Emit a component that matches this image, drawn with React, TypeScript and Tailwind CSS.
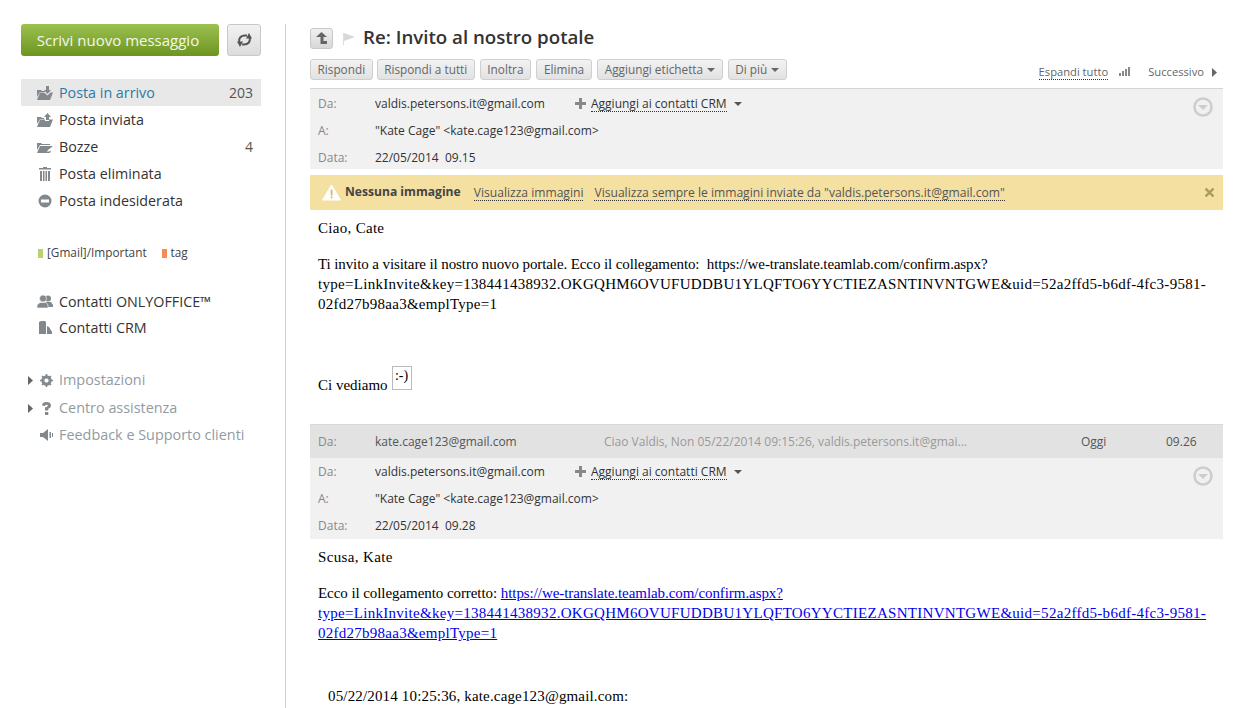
import { ReactNode } from 'react'

const sans = "font-['Open_Sans',sans-serif]"

function FolderIn() {
  return (
    <svg width="16" height="14" viewBox="0 0 16 14" fill="#83888d">
      <path d="M0 11V4h4l1 1h3v1H3z" />
      <path d="M3 6.500h4l3.500 3 3-3H16l-3 7.500H0z" />
      <path d="M9 0h3v4h2l-3.500 4L7 4h2z" />
    </svg>
  )
}

function FolderOut() {
  return (
    <svg width="16" height="14" viewBox="0 0 16 14" fill="#83888d">
      <path d="M0 11V4h4l1 1h2v1H3z" />
      <path d="M3 6.500h5v1.500h4V6.500h4l-3 7.500H0z" />
      <path d="M10.500 0L14 4h-2v3H9V4H7z" />
    </svg>
  )
}

function FolderDraft() {
  return (
    <svg width="16" height="12" viewBox="0 0 16 12" fill="#83888d">
      <path d="M0 9V2h4l1 1h8v1H3z" />
      <path d="M3 5h13l-5 4-1 2 3-1 1-1-1 3H0z" />
    </svg>
  )
}

function Trash() {
  return (
    <svg width="12" height="14" viewBox="0 0 12 14" fill="#83888d">
      <path d="M0 1h12v1.500H0zM4 0h4v1H4z" />
      <path d="M1 4h2v10H1zM4 4h1.500v10H4zM6.500 4H8v10H6.500zM9 4h2v10H9z" />
    </svg>
  )
}

function Blocked() {
  return (
    <svg width="14" height="14" viewBox="0 0 14 14">
      <circle cx="7" cy="7" r="6.500" fill="#83888d" />
      <rect x="3" y="5.500" width="8" height="3" fill="#fff" />
    </svg>
  )
}

function People() {
  return (
    <svg width="16" height="13" viewBox="0 0 16 13" fill="#83888d">
      <circle cx="11" cy="3.500" r="3" />
      <path d="M8 7h6l2 3v2H8z" />
      <circle cx="6" cy="3.500" r="3.500" stroke="#fff" strokeWidth="0.6" />
      <path d="M3 7.500h6l2 2.500v3H0v-3z" stroke="#fff" strokeWidth="0.6" />
    </svg>
  )
}

function Building() {
  return (
    <svg width="13" height="13" viewBox="0 0 13 13" fill="#83888d">
      <path d="M0 1l2-1h4l1 1v12H0z" />
      <path d="M8 5l2 1 3 5v2H8z" />
    </svg>
  )
}

function Gear() {
  return (
    <svg width="13" height="13" viewBox="0 0 13 13">
      <circle cx="6.500" cy="6.500" r="4" fill="none" stroke="#83888d" strokeWidth="2.400" />
      <path d="M6.500 0v13M0 6.500h13M2 2l9 9M11 2l-9 9" stroke="#83888d" strokeWidth="1.600" />
      <circle cx="6.500" cy="6.500" r="2" fill="#fff" />
    </svg>
  )
}

function Question() {
  return (
    <svg width="9" height="13" viewBox="0 0 9 13" fill="#83888d">
      <path d="M0 3.500C0 1 2 0 4.500 0S9 1 9 3.500c0 2-1.500 2.700-2.700 3.300V8.500H3V5.500c1.500-.6 2.800-.8 2.800-1.900 0-1.300-2.600-1.200-2.800.4z" />
      <rect x="3" y="10" width="3.300" height="3" />
    </svg>
  )
}

function Megaphone() {
  return (
    <svg width="13" height="12" viewBox="0 0 13 12" fill="#83888d">
      <path d="M0 4h3l5-4v12L3 8H0z" />
      <rect x="9.500" y="3" width="1.500" height="6" />
      <rect x="12" y="4" width="1" height="4" />
    </svg>
  )
}

function Caret({ color = '#666', className = '' }: { color?: string; className?: string }) {
  return (
    <svg width="8" height="4" viewBox="0 0 8 4" className={className}>
      <path d="M0 0h8L4 4z" fill={color} />
    </svg>
  )
}

function ArrowRight() {
  return (
    <svg width="5" height="9" viewBox="0 0 5 9">
      <path d="M0 0l5 4.500L0 9z" fill="#666" />
    </svg>
  )
}

function NavRow({ icon, label, count, active }: { icon: ReactNode; label: string; count?: string; active?: boolean }) {
  return (
    <div className={`flex h-[27px] items-center pr-2 ${active ? 'bg-[#e8e8e8]' : ''}`}>
      <span className="flex w-[38px] justify-end pr-[6px]">
        <span className="flex w-[16px] justify-center">{icon}</span>
      </span>
      <span className={`text-[14.3px] ${active ? 'text-[#2a7bab]' : 'text-[#333]'}`}>{label}</span>
      {count && <span className="ml-auto text-[14px] text-[#555]">{count}</span>}
    </div>
  )
}

function HelpRow({ icon, label, arrow, h }: { icon: ReactNode; label: string; arrow?: boolean; h: string }) {
  return (
    <div className={`flex items-center ${h}`}>
      <span className="flex w-[38px] items-center pl-[7px]">
        <span className="w-[5px]">{arrow && <ArrowRight />}</span>
        <span className="ml-[5px] flex w-[16px] justify-center">{icon}</span>
      </span>
      <span className="text-[14.4px] text-[#929ba2]">{label}</span>
    </div>
  )
}

function Sidebar() {
  return (
    <aside className="mt-[24px] w-[286px] shrink-0 border-r border-[#d0d0d0] pl-[21px] pr-[24px]">
      <div className="flex gap-[8px]">
        <button className="h-[32px] w-[198px] rounded-[3px] bg-gradient-to-b from-[#9cc14f] to-[#6e9420] pr-[4px] text-[15px] text-[#f4f8e8]">
          Scrivi nuovo messaggio
        </button>
        <button className="flex h-[32px] w-[34px] items-center justify-center rounded-[3px] border border-[#c8c8c8] bg-gradient-to-b from-[#f2f2f2] to-[#dcdcdc]">
          <svg width="15" height="14" viewBox="0 0 15 14" fill="none" stroke="#555" strokeWidth="2">
            <path d="M2.200 9C1.500 5 4 2.500 8 2.500h2" />
            <path d="M12.800 5c.7 4-1.800 6.500-5.800 6.500H5" />
            <path d="M12 0l3 5.500H9z" fill="#555" stroke="none" />
            <path d="M3 14L0 8.500h6z" fill="#555" stroke="none" />
          </svg>
        </button>
      </div>

      <nav className="mt-[23px]">
        <NavRow icon={<FolderIn />} label="Posta in arrivo" count="203" active />
        <NavRow icon={<FolderOut />} label="Posta inviata" />
        <NavRow icon={<FolderDraft />} label="Bozze" count="4" />
        <NavRow icon={<Trash />} label="Posta eliminata" />
        <NavRow icon={<Blocked />} label="Posta indesiderata" />
      </nav>

      <div className="mt-[29px] flex h-[20px] items-center pl-[17px] text-[11.8px] text-[#444]">
        <span className="mr-[4px] h-[9px] w-[5px] bg-[#b9d26e]" />
        <span>[Gmail]/Important</span>
        <span className="ml-[15px] mr-[4px] h-[9px] w-[5px] bg-[#f98a58]" />
        <span>tag</span>
      </div>

      <div className="mt-[25px]">
        <NavRow icon={<People />} label="Contatti ONLYOFFICE™" />
        <div className="-mt-[1px]">
          <NavRow icon={<Building />} label="Contatti CRM" />
        </div>
      </div>

      <div className="mt-[25px]">
        <HelpRow icon={<Gear />} label="Impostazioni" arrow h="h-[28px]" />
        <HelpRow icon={<Question />} label="Centro assistenza" arrow h="h-[28px]" />
        <HelpRow icon={<Megaphone />} label="Feedback e Supporto clienti" h="h-[26px]" />
      </div>
    </aside>
  )
}

function ToolButton({ children, className = 'px-[6.500px]' }: { children: ReactNode; className?: string }) {
  return (
    <button className={`flex h-[21px] items-center gap-[4px] rounded-[3px] border border-[#cfcfcf] bg-gradient-to-b from-[#f2f2f2] to-[#e2e2e2] text-[11.8px] text-[#666] ${className}`}>
      {children}
    </button>
  )
}

function HeaderRow({ label, children }: { label: string; children: ReactNode }) {
  return (
    <div className="flex h-[27px] shrink-0 items-center text-[12px] text-[#333]">
      <span className="w-[57px] text-[#888]">{label}</span>
      {children}
    </div>
  )
}

function MessageHeader({ from, date, className }: { from: string; date: string; className: string }) {
  return (
    <div className={`relative bg-[#f1f1f1] pl-[8px] ${className}`}>
      <HeaderRow label="Da:">
        <span className="w-[200px]">{from}</span>
        <svg width="11" height="11" viewBox="0 0 11 11" fill="#888" className="mr-[5px]">
          <path d="M4 0h3v4h4v3H7v4H4V7H0V4h4z" />
        </svg>
        <span className="border-b border-dotted border-[#333] leading-[15px] text-[#333]">Aggiungi ai contatti CRM</span>
        <Caret color="#555" className="ml-[7px]" />
      </HeaderRow>
      <HeaderRow label="A:">
        <span>"Kate Cage" &lt;kate.cage123@gmail.com&gt;</span>
      </HeaderRow>
      <HeaderRow label="Data:">
        <span>{date}</span>
      </HeaderRow>
      <svg width="20" height="20" viewBox="0 0 20 20" className="absolute right-[10px] top-[8px]">
        <circle cx="10" cy="10" r="8.500" fill="none" stroke="#cdcdcd" strokeWidth="2.500" />
        <path d="M5 8h10l-5 5z" fill="#cdcdcd" />
      </svg>
    </div>
  )
}

function MailText({ children }: { children: ReactNode }) {
  return <div className="whitespace-nowrap font-['Liberation_Serif',serif] text-[15px] leading-[20px] text-black">{children}</div>
}

function Main() {
  return (
    <main className="min-w-0 flex-1 pl-[24px] pr-[17px] pt-[26px]">
      <div className="flex h-[24px] items-center">
        <button className="flex h-[21px] w-[23px] items-center justify-center rounded-[3px] border border-[#c8c8c8] bg-gradient-to-b from-[#f0f0f0] to-[#d8d8d8]">
          <svg width="11" height="12" viewBox="0 0 11 12" fill="#666">
            <path d="M5.500 0L11 5H7.500v4H11v3H4.500V5H0z" />
          </svg>
        </button>
        <svg width="12" height="13" viewBox="0 0 12 13" className="ml-[10px]">
          <rect x="0" y="1" width="1" height="12" fill="#ddd" />
          <path d="M1 1l11 4-11 4z" fill="#d8d8d8" />
        </svg>
        <h1 className="mb-[2px] ml-[8px] text-[18.7px] font-semibold text-[#333]">Re: Invito al nostro potale</h1>
      </div>

      <div className="mt-[9px] flex h-[21px] items-center gap-[5px]">
        <ToolButton>Rispondi</ToolButton>
        <div className="-ml-[1px]">
          <ToolButton>Rispondi a tutti</ToolButton>
        </div>
        <ToolButton>Inoltra</ToolButton>
        <ToolButton className="px-[7px]">Elimina</ToolButton>
        <ToolButton>
          Aggiungi etichetta <Caret />
        </ToolButton>
        <ToolButton>
          Di più <Caret />
        </ToolButton>
        <div className="ml-auto mt-[5px] flex items-center text-[11.2px] text-[#666]">
          <span className="border-b border-dotted border-[#333] leading-[14px]">Espandi tutto</span>
          <svg width="11" height="9" viewBox="0 0 11 9" fill="#888" className="mb-[2px] ml-[11px]">
            <rect x="0" y="6" width="2" height="3" />
            <rect x="3" y="4" width="2" height="5" />
            <rect x="6" y="2" width="2" height="7" />
            <rect x="9" y="0" width="2" height="9" />
          </svg>
          <span className="ml-[18px]">Successivo</span>
          <span className="ml-[8px] mr-[6px]">
            <ArrowRight />
          </span>
        </div>
      </div>

      <div className="mt-[8px] border-t border-[#d4d4d4]">
        <MessageHeader from="valdis.petersons.it@gmail.com" date="22/05/2014 &nbsp;09.15" className="h-[80px] pt-[1px]" />
      </div>

      <div className="mt-[6px] flex h-[35px] items-center bg-[#f4e0a1] pl-[12px] pr-[9px] text-[12.1px]">
        <svg width="19" height="17" viewBox="0 0 19 17" className="mr-[4px]">
          <path d="M9.500 1L18.500 16H.5z" fill="#fff" stroke="#fff" strokeLinejoin="round" />
          <rect x="8.700" y="5.500" width="1.800" height="6" fill="#d9b866" />
          <rect x="8.700" y="12.500" width="1.800" height="1.800" fill="#d9b866" />
        </svg>
        <span className="font-bold text-[#444]">Nessuna immagine</span>
        <span className="ml-[13px] border-b border-dotted border-[#333] leading-[15px] text-[#555]">Visualizza immagini</span>
        <span className="ml-[11px] border-b border-dotted border-[#333] leading-[15px] text-[#555]">
          Visualizza sempre le immagini inviate da "valdis.petersons.it@gmail.com"
        </span>
        <svg width="9" height="9" viewBox="0 0 9 9" className="ml-auto" stroke="#a89d5e" strokeWidth="2.400">
          <path d="M0.500 0.500l8 8M8.500 0.500l-8 8" />
        </svg>
      </div>

      <div className="h-[214px] pl-[8px] pr-[16px] pt-[8px]">
        <MailText>
          <span className="tracking-[0.3px]">Ciao, Cate</span>
        </MailText>
        <div className="mt-[16px]">
          <MailText>
            <span className="tracking-[-0.1px]">Ti invito a visitare il nostro nuovo portale. Ecco il collegamento:&nbsp; https://we-translate.teamlab.com/confirm.aspx?</span>
            <br />
            <span className="tracking-[0.29px]">type=LinkInvite&amp;key=138441438932.OKGQHM6OVUFUDDBU1YLQFTO6YYCTIEZASNTINVNTGWE&amp;uid=52a2ffd5-b6df-4fc3-9581-</span>
            <br />
            <span className="tracking-[0.26px]">02fd27b98aa3&amp;emplType=1</span>
          </MailText>
        </div>
        <div className="mt-[52px] flex items-end">
          <MailText>Ci vediamo</MailText>
          <span className="mb-[5px] ml-[4px] flex h-[24px] w-[20px] justify-center border border-[#bbb] font-['Liberation_Serif',serif] text-[14px] leading-[18px] text-black">
            :-)
          </span>
        </div>
      </div>

      <div className="flex h-[34px] items-center border-t border-[#d8d8d8] bg-[#e2e2e2] pl-[8px] text-[12px] text-[#555]">
        <span className="w-[57px] text-[#888]">Da:</span>
        <span className="w-[229px]">kate.cage123@gmail.com</span>
        <span className="w-[477px] text-[#999]">Ciao Valdis, Non 05/22/2014 09:15:26, valdis.petersons.it@gmai...</span>
        <span className="w-[85px]">Oggi</span>
        <span>09.26</span>
      </div>

      <MessageHeader from="valdis.petersons.it@gmail.com" date="22/05/2014 &nbsp;09.28" className="h-[81px]" />

      <div className="pl-[8px] pr-[16px] pt-[8px]">
        <MailText>
          <span className="tracking-[0.36px]">Scusa, Kate</span>
        </MailText>
        <div className="mt-[16px]">
          <MailText>
            <span className="tracking-[-0.07px]">Ecco il collegamento corretto: </span>
            <span className="tracking-[-0.07px] text-[#0000ee] underline">https://we-translate.teamlab.com/confirm.aspx?</span>
            <br />
            <span className="tracking-[0.29px] text-[#0000ee] underline">type=LinkInvite&amp;key=138441438932.OKGQHM6OVUFUDDBU1YLQFTO6YYCTIEZASNTINVNTGWE&amp;uid=52a2ffd5-b6df-4fc3-9581-</span>
            <br />
            <span className="tracking-[0.26px] text-[#0000ee] underline">02fd27b98aa3&amp;emplType=1</span>
          </MailText>
        </div>
        <div className="mt-[43px] pl-[10px]">
          <MailText>
            <span className="tracking-[0.16px]">05/22/2014 10:25:36, kate.cage123@gmail.com:</span>
          </MailText>
        </div>
      </div>
    </main>
  )
}

export default function App() {
  return (
    <div className={`flex h-[708px] w-[1240px] overflow-hidden bg-white ${sans}`}>
      <Sidebar />
      <Main />
    </div>
  )
}
